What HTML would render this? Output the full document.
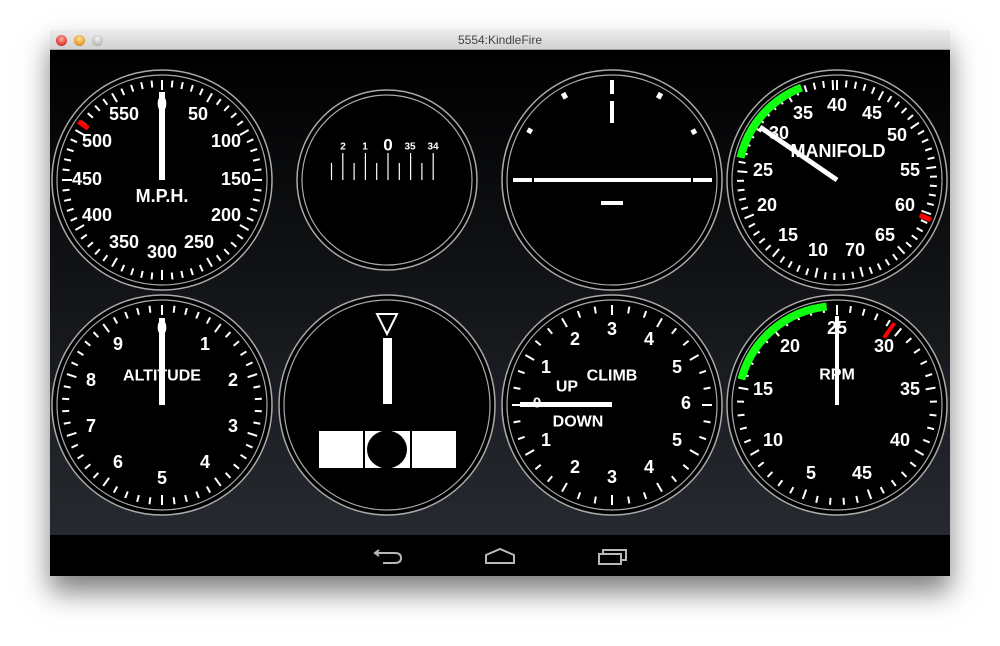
<!DOCTYPE html>
<html><head><meta charset="utf-8"><style>
html,body{margin:0;padding:0;background:#fff;width:1000px;height:646px;overflow:hidden}
#win{position:absolute;left:50px;top:30px;width:900px;height:546px;box-shadow:0 16px 26px rgba(0,0,0,0.5);background:#000}
#tb{position:absolute;left:0;top:0;width:900px;height:20px;background:linear-gradient(#ececec,#d2d2d2);border-bottom:1px solid #a0a0a0;box-sizing:border-box;font:12px "Liberation Sans",sans-serif;color:#444;text-align:center;line-height:20px}
.l{position:absolute;top:5px;width:11px;height:11px;border-radius:50%}
#c{position:absolute;left:0;top:20px;width:900px;height:485px;background:linear-gradient(#000 0%,#0b0c0e 30%,#262a30 100%)}
#nav{position:absolute;left:0;top:505px;width:900px;height:41px;background:#000}
svg text{font-family:"Liberation Sans",sans-serif;font-weight:bold;fill:#fff;text-anchor:middle;dominant-baseline:central}
</style></head><body>
<div id="win">
<div id="tb">5554:KindleFire
<div class="l" style="left:6px;background:radial-gradient(circle at 50% 35%,#ffb0a8,#e0443a 60%,#a02018)"></div>
<div class="l" style="left:24px;background:radial-gradient(circle at 50% 35%,#ffe0a0,#e8a030 60%,#a86810)"></div>
<div class="l" style="left:42px;background:radial-gradient(circle at 50% 35%,#f4f4f4,#c0c0c0 60%,#909090)"></div>
</div>
<div id="c"></div>
<div id="nav"></div>
</div>
<svg id="s" width="1000" height="646" style="position:absolute;left:0;top:0" viewBox="0 0 1000 646">
<g id="bg"></g>
<g id="tk" stroke="#fff" stroke-width="2"></g>
<!-- speedometer -->
<g font-size="18">
<text x="162" y="104">0</text><text x="198" y="114">50</text><text x="226" y="141">100</text><text x="236" y="179">150</text><text x="226" y="215">200</text><text x="199" y="242">250</text><text x="162" y="252">300</text><text x="124" y="242">350</text><text x="97" y="215">400</text><text x="87" y="179">450</text><text x="97" y="141">500</text><text x="124" y="114">550</text>
<text x="162" y="196">M.P.H.</text>
</g>
<rect x="159" y="92" width="6" height="88" fill="#fff"/>
<ellipse cx="162" cy="105" rx="4" ry="7" fill="#fff"/>
<!-- heading -->
<g font-size="10"><text x="343" y="147">2</text><text x="365" y="147">1</text><text x="410" y="147">35</text><text x="433" y="147">34</text></g>
<text x="388" y="145" font-size="17">0</text>
<!-- attitude -->
<g fill="#fff">
<rect x="610" y="80" width="4" height="14"/><rect x="610" y="101" width="4" height="22"/>
<rect x="513" y="178" width="19" height="4"/><rect x="534" y="178" width="157" height="4"/><rect x="693" y="178" width="19" height="4"/>
<rect x="601" y="201" width="22" height="4"/>
<rect x="562" y="93" width="5" height="6" transform="rotate(-30 564 96)"/><rect x="657" y="93" width="5" height="6" transform="rotate(30 660 96)"/>
<rect x="527" y="129" width="5" height="5" transform="rotate(-60 529 131)"/><rect x="692" y="129" width="5" height="5" transform="rotate(60 694 131)"/>
</g>
<!-- manifold -->
<g font-size="18">
<text x="837" y="105">40</text><text x="872" y="113">45</text><text x="897" y="135">50</text><text x="910" y="170">55</text><text x="905" y="205">60</text><text x="885" y="235">65</text><text x="855" y="250">70</text><text x="818" y="250">10</text><text x="788" y="235">15</text><text x="767" y="205">20</text><text x="763" y="170">25</text><text x="779" y="133">30</text><text x="803" y="113">35</text>
<text x="838" y="151">MANIFOLD</text>
</g>
<line x1="837" y1="180" x2="760" y2="127" stroke="#fff" stroke-width="5"/>
<!-- altimeter -->
<g font-size="18">
<text x="162" y="328">0</text><text x="205" y="344">1</text><text x="233" y="380">2</text><text x="233" y="426">3</text><text x="205" y="462">4</text><text x="162" y="478">5</text><text x="118" y="462">6</text><text x="91" y="426">7</text><text x="91" y="380">8</text><text x="118" y="344">9</text>
<text x="162" y="376" font-size="16">ALTITUDE</text>
</g>
<rect x="159" y="318" width="6" height="87" fill="#fff"/>
<ellipse cx="162" cy="328" rx="4" ry="7" fill="#fff"/>
<!-- turn -->
<polygon points="377,314 397,314 387,334" fill="none" stroke="#fff" stroke-width="2"/>
<rect x="383" y="338" width="9" height="66" fill="#fff"/>
<rect x="319" y="431" width="44" height="37" fill="#fff"/>
<rect x="365" y="431" width="45" height="37" fill="#fff"/>
<ellipse cx="387" cy="449.5" rx="20" ry="19" fill="#000"/>
<rect x="412" y="431" width="44" height="37" fill="#fff"/>
<!-- climb -->
<g font-size="18">
<text x="612" y="329">3</text><text x="575" y="339">2</text><text x="649" y="339">4</text><text x="546" y="367">1</text><text x="677" y="367">5</text><text x="686" y="403">6</text><text x="546" y="440">1</text><text x="677" y="440">5</text><text x="575" y="467">2</text><text x="649" y="467">4</text><text x="612" y="477">3</text>
<text x="612" y="376" font-size="16">CLIMB</text><text x="567" y="387" font-size="16">UP</text><text x="578" y="422" font-size="16">DOWN</text>
</g>
<rect x="520" y="402" width="92" height="5" fill="#fff"/>
<text x="537" y="403" font-size="15">0</text>
<!-- rpm -->
<g font-size="18">
<text x="837" y="328">25</text><text x="884" y="346">30</text><text x="910" y="389">35</text><text x="900" y="440">40</text><text x="862" y="473">45</text><text x="811" y="473">5</text><text x="773" y="440">10</text><text x="763" y="389">15</text><text x="790" y="346">20</text>
<text x="837" y="375" font-size="16">RPM</text>
</g>
<rect x="835" y="316" width="4" height="89" fill="#fff"/>
<!-- nav icons -->
<g fill="none" stroke="#b8b8b8" stroke-width="2">
<path d="M379 550 L375 553 L379 556 M375 553 H395 Q401 553 401 558 Q401 563 395 563 H383"/>
<path d="M486 563 V555 L500 549 L514 555 V563 Z"/>
<rect x="599" y="554" width="22" height="10"/>
<path d="M603 554 V550 H626 V560 H621"/>
</g>
</svg>
<script>
var NS="http://www.w3.org/2000/svg",bg=document.getElementById('bg'),tk=document.getElementById('tk');
function el(p,t,a){var e=document.createElementNS(NS,t);for(var k in a)e.setAttribute(k,a[k]);p.appendChild(e);return e;}
function rad(a){return (a-90)*Math.PI/180;}
function pt(cx,cy,r,a){return [cx+r*Math.cos(rad(a)),cy+r*Math.sin(rad(a))];}
function dial(cx,cy,r,rx){rx=rx||r;
 el(bg,'ellipse',{cx:cx,cy:cy,rx:rx,ry:r,fill:'#000',stroke:'#aaa','stroke-width':1.5});
 el(bg,'ellipse',{cx:cx,cy:cy,rx:rx-5,ry:r-5,fill:'none',stroke:'#aaa','stroke-width':1.2});}
function tick(cx,cy,r1,r2,a,col,w){var p=pt(cx,cy,r1,a),q=pt(cx,cy,r2,a);el(tk,'line',{x1:p[0],y1:p[1],x2:q[0],y2:q[1],stroke:col||'#fff','stroke-width':w||2});}
function arc(cx,cy,r,a1,a2,col,w){var p=pt(cx,cy,r,a1),q=pt(cx,cy,r,a2);el(tk,'path',{d:'M'+p[0]+' '+p[1]+' A'+r+' '+r+' 0 0 1 '+q[0]+' '+q[1],stroke:col,'stroke-width':w,fill:'none'});}
dial(162,180,110);dial(387,180,90);dial(612,180,110);dial(837,180,110);
dial(162,405,110);dial(387,405,110,108);dial(612,405,110);dial(837,405,110);
var i;
for(i=0;i<60;i++){var a=i*6;tick(162,180,i%5?93:90,100,a);}
tick(162,180,90,102,-55,'#f00',5);
for(i=-5;i<=4;i++){var x=388+i*11.3,h=(i%2==0)?153:163;el(tk,'line',{x1:x,y1:h,x2:x,y2:180,stroke:'#fff','stroke-width':1.2});}
for(i=0;i<66;i++){var a=i*5.5;tick(837,180,i%5?93:90,100,a);}
arc(837,180,99,-77,-21,'#1f1',8);
tick(837,180,90,102,113,'#f00',5);
for(i=0;i<50;i++){var a=i*7.2;tick(162,405,i%5?93:90,100,a);}
for(i=0;i<36;i++){var a=i*10;if(i%3==0)tick(612,405,90,100,a);else tick(612,405,93,100,a);}
for(i=0;i<45;i++){var a=i*8;tick(837,405,i%5?93:90,100,a);}
arc(837,405,99,-75,-6,'#1f1',8);
tick(837,405,82,100,35,'#f00',4);
</script>
</body></html>
